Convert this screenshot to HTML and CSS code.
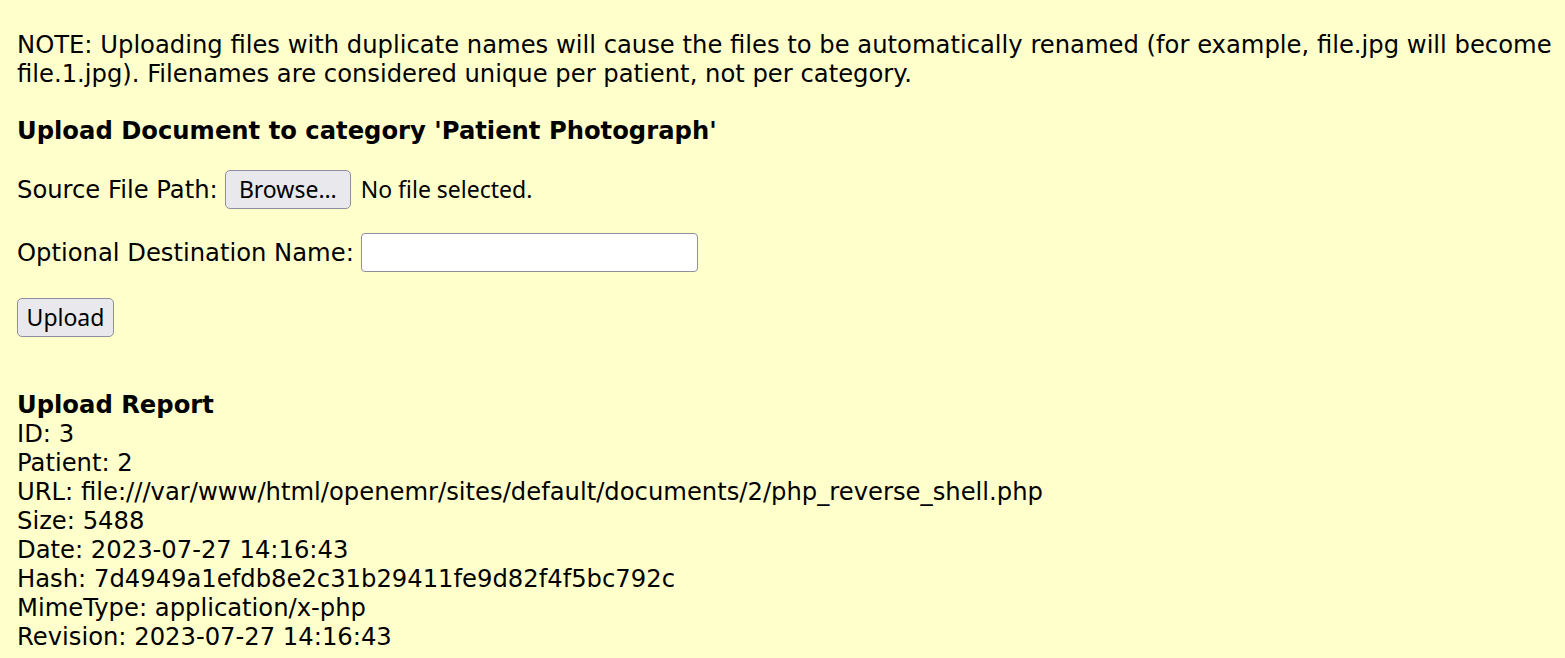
FILE: index.html
```html
<!DOCTYPE html>
<html>
<head>
<meta charset="utf-8">
<link rel="stylesheet" href="styles.css">
</head>
<body>
<div class="page">
  <p class="note">NOTE: Uploading files with duplicate names will cause the files to be automatically renamed (for example, file.jpg will become file.1.jpg). Filenames are considered unique per patient, not per category.</p>
  <h3 class="heading">Upload Document to category 'Patient Photograph'</h3>
  <div class="row row-source">
    <span class="label">Source File Path:</span>
    <span class="btn btn-browse">Browse…</span>
    <span class="nofile">No file selected.</span>
  </div>
  <div class="row row-dest">
    <span class="label">Optional Destination Name:</span>
    <span class="textbox"></span>
  </div>
  <div class="row row-upload">
    <span class="btn btn-upload">Upload</span>
  </div>
  <div class="report">
    <div class="report-title">Upload Report</div>
    <div>ID: 3</div>
    <div>Patient: 2</div>
    <div>URL: file:///var/www/html/openemr/sites/default/documents/2/php_reverse_shell.php</div>
    <div>Size: 5488</div>
    <div>Date: 2023-07-27 14:16:43</div>
    <div>Hash: 7d4949a1efdb8e2c31b29411fe9d82f4f5bc792c</div>
    <div>MimeType: application/x-php</div>
    <div>Revision: 2023-07-27 14:16:43</div>
  </div>
</div>
</body>
</html>
```
FILE: styles.css
```css
html, body {
  margin: 0;
  padding: 0;
  background: #ffffcc;
}
.page {
  padding: 30px 10px 0 17px;
  font-family: "DejaVu Sans", sans-serif;
  font-size: 24.25px;
  line-height: 29px;
  color: #000;
}
.note {
  margin: 0;
}
.heading {
  margin: 28px 0 0 0;
  font-size: 24.25px;
  font-weight: bold;
  line-height: 29px;
}
.row {
  display: flex;
  align-items: center;
  gap: 7px;
}
.row-source {
  margin-top: 25px;
}
.row-dest {
  margin-top: 24px;
}
.row-upload {
  margin-top: 26px;
}
.btn {
  display: inline-flex;
  align-items: center;
  justify-content: center;
  box-sizing: border-box;
  height: 39px;
  background: #e9e9ed;
  border: 1px solid #8f8f9d;
  border-radius: 5px;
  font-family: "Noto Sans", sans-serif;
  font-size: 23px;
  color: #000;
}
.btn-browse {
  width: 126px;
}
.btn-upload {
  width: 97px;
}
.nofile {
  font-family: "Noto Sans", sans-serif;
  font-size: 23px;
  margin-left: 3px;
}
.textbox {
  display: inline-block;
  box-sizing: border-box;
  width: 337px;
  height: 39px;
  background: #fff;
  border: 1px solid #8f8f9d;
  border-radius: 4px;
}
.report {
  margin-top: 53px;
}
.report-title {
  font-weight: bold;
}
```
